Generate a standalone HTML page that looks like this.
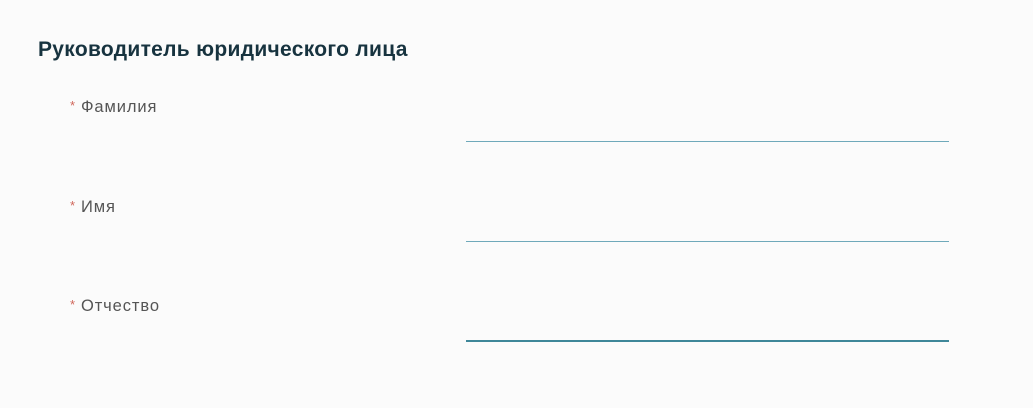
<!DOCTYPE html>
<html><head><meta charset="utf-8"><style>
html,body{margin:0;padding:0;width:1033px;height:408px;background:#fbfbfb;overflow:hidden;font-family:"Liberation Sans","DejaVu Sans",sans-serif;}
h1{position:absolute;left:38px;top:38px;margin:0;font-size:21px;font-weight:bold;color:#17333f;letter-spacing:0.3px;white-space:nowrap}
.l{position:absolute;left:70px;font-size:16.5px;color:#555;white-space:nowrap;letter-spacing:0.9px}
.l span{color:#d0665a;font-size:13px;margin-right:5px;position:relative;top:-2px}
.ln{position:absolute;left:466px;width:483px;height:1px;background:#6fa9ba}
</style></head><body>
<h1>Руководитель юридического лица</h1>
<div class="l" style="top:98px"><span>*</span>Фамилия</div>
<div class="ln" style="top:141px"></div>
<div class="l" style="top:198px"><span>*</span>Имя</div>
<div class="ln" style="top:241px"></div>
<div class="l" style="top:297px"><span>*</span>Отчество</div>
<div class="ln" style="top:340px;background:#3f8799;height:1.5px"></div>
</body></html>
